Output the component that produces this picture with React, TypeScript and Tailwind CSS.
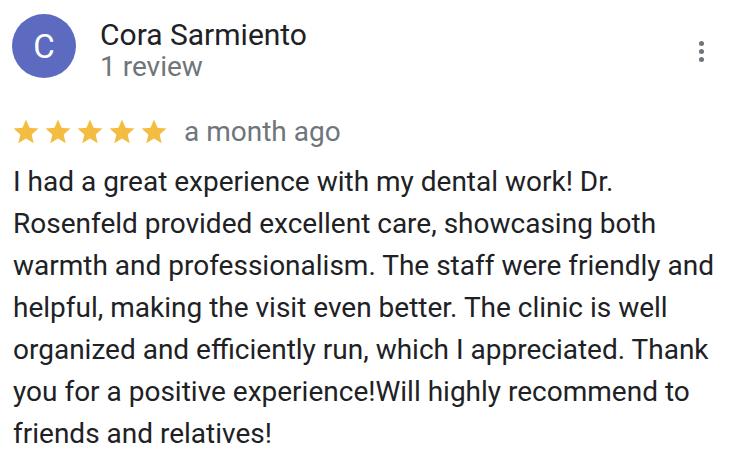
import React from "react";

function Star() {
  return (
    <svg width="30" height="30" viewBox="0 0 24 24" className="shrink-0">
      <path
        d="M12 17.27L18.18 21l-1.64-7.03L22 9.24l-7.19-.61L12 2 9.19 8.63 2 9.24l5.46 4.73L5.82 21z"
        fill="#f4bd42"
      />
    </svg>
  );
}

export default function App() {
  return (
    <div
      className="w-[740px] h-[468px] bg-white overflow-hidden"
      style={{ fontFamily: "Roboto, 'Liberation Sans', sans-serif" }}
    >
      <div className="flex items-start pl-[12px] pr-[30px] pt-[14px]">
        <div className="w-[64px] h-[64px] rounded-full bg-[#5c6bc0] flex items-center justify-center text-white text-[33px] leading-none shrink-0">
          C
        </div>
        <div className="ml-[24px] flex-1 pt-[5px]">
          <div className="text-[30px] leading-[32px] text-[#202124]">Cora Sarmiento</div>
          <div className="text-[28px] leading-[32px] text-[#70757a]">1 review</div>
        </div>
        <div className="flex flex-col gap-[3px] mt-[27px] mr-[6px]">
          <div className="w-[5px] h-[5px] rounded-full bg-[#70757a]" />
          <div className="w-[5px] h-[5px] rounded-full bg-[#70757a]" />
          <div className="w-[5px] h-[5px] rounded-full bg-[#70757a]" />
        </div>
      </div>
      <div className="flex items-center pl-[11px] mt-[33px]">
        <div className="flex gap-[2px]">
          <Star />
          <Star />
          <Star />
          <Star />
          <Star />
        </div>
        <div className="ml-[15px] text-[28px] leading-[32px] text-[#70757a]">a month ago</div>
      </div>
      <div className="pl-[13px] pr-[16px] mt-[13px] text-[28px] leading-[42px] text-[#202124] w-[740px]">
        I had a great experience with my dental work! Dr. Rosenfeld provided excellent care, showcasing both warmth and professionalism. The staff were friendly and helpful, making the visit even better. The clinic is well organized and efficiently run, which I appreciated. Thank you for a positive experience!Will highly recommend to friends and relatives!
      </div>
    </div>
  );
}
